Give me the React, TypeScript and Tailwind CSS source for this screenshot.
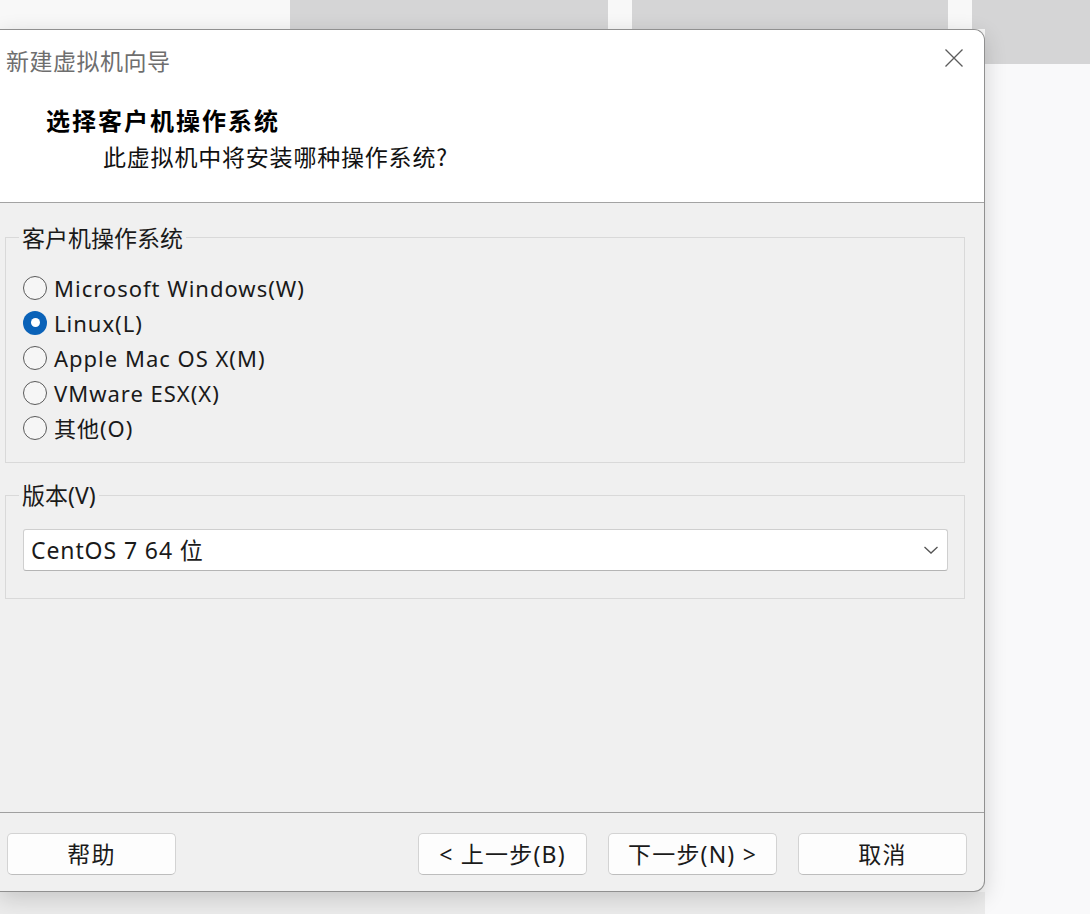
import React from "react";

const font = "font-['Noto_Sans_CJK_SC','Noto_Sans',sans-serif]";
const latin = "font-['Noto_Sans','Noto_Sans_CJK_SC',sans-serif]";

function Radio({ label, checked }: { label: string; checked?: boolean }) {
    return (
        <div className="flex items-center h-[35px] ml-[4px]">
            {checked ? (
                <span className="w-[24px] h-[24px] rounded-full bg-[#0a62b8] flex items-center justify-center">
                    <span className="w-[9px] h-[9px] rounded-full bg-white" />
                </span>
            ) : (
                <span className="w-[24px] h-[24px] rounded-full border-[1.5px] border-[#5a5a5a] bg-[#f6f6f6]" />
            )}
            <span className={`ml-[7px] text-[22px] leading-[28px] text-[#1a1a1a] tracking-[1px] ${latin}`}>{label}</span>
        </div>
    );
}

function Btn({ children, className = "" }: { children: React.ReactNode; className?: string }) {
    return (
        <button
            className={`h-[42px] w-[169px] rounded-[5px] border border-[#d3d3d3] border-b-[#bdbdbd] bg-[#fdfdfd] text-[23px] text-[#1a1a1a] tracking-[1.2px] flex items-center justify-center ${latin} ${className}`}
        >
            {children}
        </button>
    );
}

export default function App() {
    const systems = [
        { label: "Microsoft Windows(W)" },
        { label: "Linux(L)", checked: true },
        { label: "Apple Mac OS X(M)" },
        { label: "VMware ESX(X)" },
        { label: "其他(O)" },
    ];

    return (
        <div className={`w-[1090px] h-[914px] flex overflow-hidden bg-[#f7f7f7] ${font}`}>
            {/* left column: backdrop strip + dialog */}
            <div className="w-[985px] flex flex-col">
                <div className="h-[29px] flex shrink-0">
                    <div className="w-[290px] bg-[#f8f8f8]" />
                    <div className="w-[318px] bg-[#d5d5d6]" />
                    <div className="w-[24px] bg-[#f8f8f8]" />
                    <div className="w-[316px] bg-[#d5d5d6]" />
                    <div className="w-[24px] bg-[#f8f8f8]" />
                    <div className="flex-1 bg-[#d5d5d6]" />
                </div>

                {/* dialog */}
                <div className="h-[863px] shrink-0 flex flex-col bg-[#f0f0f0] border-t border-r border-b border-[#909090] rounded-tr-[11px] rounded-br-[11px] shadow-[0_6px_22px_rgba(0,0,0,0.16)] relative z-10">
                    <div className="h-[173px] shrink-0 bg-white rounded-tr-[10px] border-b border-[#a3a3a3]">
                        <div className="flex items-center justify-between pt-[17px] pl-[6px] pr-[20px]">
                            <span className="text-[23px] leading-[26px] text-[#6e6e6e] tracking-[0.5px]">新建虚拟机向导</span>
                            <svg width="20" height="20" viewBox="0 0 20 20" className="-mt-[4px]">
                                <path d="M1.5 1.5 L18.5 18.5 M18.5 1.5 L1.5 18.5" stroke="#5c5c5c" strokeWidth="1.3" fill="none" />
                            </svg>
                        </div>
                        <div className="mt-[32px] pl-[46px] text-[24px] leading-[30px] font-bold text-black tracking-[2px]">
                            选择客户机操作系统
                        </div>
                        <div className="mt-[7px] pl-[103px] text-[23px] leading-[28px] text-[#111] tracking-[0.8px]">
                            此虚拟机中将安装哪种操作系统?
                        </div>
                    </div>

                    <div className="h-[609px] shrink-0 flex flex-col">
                        <fieldset className="mt-[20px] ml-[5px] w-[960px] border border-[#d9d9d9] pl-[13px] pb-[17px]">
                            <legend className="px-[3px] text-[23px] leading-[28px] text-[#1a1a1a]">客户机操作系统</legend>
                            <div className="pt-[19px]">
                                {systems.map((s) => (
                                    <Radio key={s.label} label={s.label} checked={s.checked} />
                                ))}
                            </div>
                        </fieldset>

                        <fieldset className="mt-[18px] ml-[5px] w-[960px] border border-[#d9d9d9] pl-[13px] pb-[27px]">
                            <legend className={`px-[3px] text-[23px] leading-[28px] text-[#1a1a1a] ${latin}`}>版本(V)</legend>
                            <div className="mt-[20px] ml-[4px] w-[925px] h-[42px] rounded-[3px] bg-white border border-[#cfcfcf] border-b-[#b5b5b5] flex items-center justify-between pl-[7px] pr-[8px]">
                                <span className={`text-[23px] leading-[28px] text-[#1a1a1a] tracking-[0.9px] ${latin}`}>CentOS 7 64 位</span>
                                <svg width="16" height="10" viewBox="0 0 16 10">
                                    <path d="M1.5 2 L8 8 L14.5 2" stroke="#555" strokeWidth="1.3" fill="none" />
                                </svg>
                            </div>
                        </fieldset>
                    </div>

                    <div className="flex-1 border-t border-[#a0a0a0] flex pt-[20px] pl-[7px] rounded-br-[10px]">
                        <Btn>帮助</Btn>
                        <div className="ml-auto flex gap-[21px] pr-[17px]">
                            <Btn>&lt; 上一步(B)</Btn>
                            <Btn>下一步(N) &gt;</Btn>
                            <Btn>取消</Btn>
                        </div>
                    </div>
                </div>

                <div className="flex-1 bg-[#ebebeb]" />
            </div>

            {/* right backdrop */}
            <div className="flex-1 flex flex-col">
                <div className="h-[64px] bg-[#d5d5d6]" />
                <div className="flex-1 bg-[#f9f9fa]" />
            </div>
        </div>
    );
}
